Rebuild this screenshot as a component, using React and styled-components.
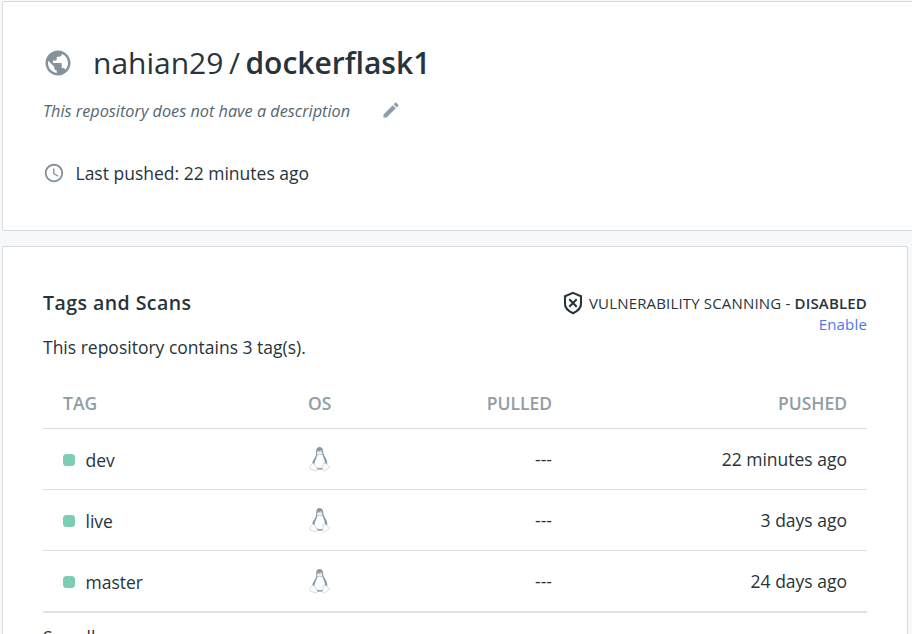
import React from "react";
import styled, { createGlobalStyle } from "styled-components";

const GlobalStyle = createGlobalStyle`
  * { box-sizing: border-box; }
  body {
    margin: 0;
    background: #f7f8fa;
    color: #27343b;
    font-family: "Open Sans", sans-serif;
    font-size: 17.5px;
    font-weight: 400;
    line-height: 24px;
    overflow: hidden;
  }
`;

const Page = styled.main`
  width: 912px;
  height: 634px;
  padding: 1px 0 0 2px;
  overflow: hidden;
`;

const Card = styled.section`
  background: #fff;
  border: 1px solid #d6d9dd;
  border-radius: 2px;
  padding: 0 40px;
`;

const SummaryCard = styled(Card)`
  height: 230px;
  width: 930px;
`;

const TagsCard = styled(Card)`
  width: 906px;
  height: 420px;
  margin-top: 15px;
`;

const TitleRow = styled.div`
  display: flex;
  align-items: center;
  height: 44px;
  margin-top: 39px;
`;

const GlobeIcon = styled.svg`
  width: 30px;
  height: 30px;
  fill: #84929c;
  margin-right: 20px;
`;

const Title = styled.h1`
  margin: 0;
  font-size: 30px;
  font-weight: 400;
  line-height: 44px;
  padding-bottom: 1px;
  white-space: pre;
`;

const RepoName = styled.span`
  font-weight: 600;
  margin-left: 5.5px;
`;

const Slash = styled.span`
  margin-left: 5.5px;
`;

const DescriptionRow = styled.div`
  display: flex;
  align-items: center;
  height: 24px;
  margin-top: 14px;
`;

const Description = styled.span`
  color: #556671;
  font-size: 16.25px;
  font-style: italic;
  white-space: nowrap;
  width: 338px;
`;

const PencilIcon = styled.svg`
  width: 20px;
  height: 20px;
  margin-bottom: 2px;
  fill: #919ca8;
`;

const PushedRow = styled.div`
  display: flex;
  align-items: center;
  height: 24px;
  margin-top: 38px;
`;

const ClockIcon = styled.svg`
  width: 22px;
  height: 22px;
  fill: #84929c;
  margin-right: 10.5px;
`;

const TagsHeader = styled.header`
  display: flex;
  justify-content: space-between;
  margin-top: 43px;
  height: 45px;
`;

const Heading = styled.h2`
  margin: 0;
  font-size: 19.5px;
  font-weight: 600;
  letter-spacing: 0.45px;
  line-height: 26px;
`;

const Scanning = styled.div`
  text-align: right;
  font-size: 15px;
  letter-spacing: 0.17px;
  line-height: 21px;
`;

const ScanStatus = styled.div`
  display: flex;
  align-items: center;
  height: 27px;
  white-space: pre;
`;

const ShieldIcon = styled.svg`
  width: 20px;
  height: 24px;
  margin: 0 6px 2px 0;
  fill: none;
  stroke: #27343b;
  stroke-width: 2.1;
`;

const Strong = styled.strong`
  font-weight: 600;
`;

const EnableLink = styled.a`
  display: block;
  margin-top: -3px;
  color: #4a76ee;
`;

const Table = styled.table`
  width: 824px;
  margin-top: 20px;
  border-collapse: separate;
  border-spacing: 0;
  table-layout: fixed;
`;

const HeadCell = styled.th`
  height: 50px;
  padding: 0 20px 1px;
  border-bottom: 1px solid #dfe0e1;
  color: #919da5;
  font-weight: 600;
  font-size: 17.5px;
  text-align: ${({ $align }) => $align || "left"};
  width: ${({ $width }) => $width};
`;

const Cell = styled.td`
  height: ${({ $last }) => ($last ? "62px" : "61px")};
  padding: 0 20px;
  border-bottom: ${({ $last }) => ($last ? 2 : 1)}px solid #dfe0e1;
  text-align: ${({ $align }) => $align || "left"};
  vertical-align: middle;
`;

const TagName = styled.div`
  display: flex;
  align-items: center;
  padding-top: 1px;
`;

const StatusDot = styled.span`
  width: 12px;
  height: 12px;
  border-radius: 3.5px;
  background: #7bceb4;
  margin: 1px 10.5px 0 0;
`;

const PenguinIcon = styled.svg`
  display: block;
  width: 22px;
  height: 28px;
  margin-left: 1px;
`;

const SeeAll = styled.div`
  margin-top: 12px;
`;

const Penguin = () => (
  <PenguinIcon viewBox="0 0 22 28">
    <path d="M7.2 8.2C7 4.2 7.8 2 10.5 1.9c2.7 0 3.8 2.2 3.8 5.6 0 3 4.3 6.2 4 11.6l-3 5.4-8.9 0.3-3.1-6.2c0-4 4.2-6.5 3.9-10.4z" fill="#8798a4" />
    <path d="M8.4 9.2c1.4 1.2 3.5 1 5 0 .6 3.2 2.9 5.3 2.5 9.8-.3 2.8-2.1 4.2-5 4.2-3.2 0-4.9-1.6-5.2-3.9-.4-3.8 2.3-5.9 2.7-10.1z" fill="#fff" />
    <path d="M8 7.3l2.5-1 3 1-.5 1.5-2.3 1.2L8 8.7z" fill="#edf0f2" />
    <circle cx="9.1" cy="6.1" r=".7" fill="#e5eaed" />
    <circle cx="12" cy="6.1" r=".9" fill="#e5eaed" />
    <path d="M3.9 18.1c1.5.2 2.5 3.2 4.2 4.9 1 1.7-.2 3.1-2 2.7L1 24c-.8-.6.2-2.2.1-3.3 0-1 1.7-.6 2.8-2.6zM14.2 18.6l3.5.1c.5 2.1 1.9 1.9 2.8 3.2-.1 1.1-2.3 1.7-4.1 3.5-1.7 1.2-3.1.2-2.9-1.6z" fill="#fcfdfd" stroke="#ccd3d8" strokeWidth=".8" />
  </PenguinIcon>
);

const tags = [
  { name: "dev", pushed: "22 minutes ago" },
  { name: "live", pushed: "3 days ago" },
  { name: "master", pushed: "24 days ago" },
];

export default function App() {
  return (
    <>
      <GlobalStyle />
      <Page>
        <SummaryCard>
          <TitleRow>
            <GlobeIcon viewBox="0 0 24 24">
              <path d="M12 2C6.48 2 2 6.48 2 12s4.48 10 10 10 10-4.48 10-10S17.52 2 12 2zm-1 17.93c-3.95-.49-7-3.85-7-7.93 0-.62.08-1.21.21-1.79L9 15v1c0 1.1.9 2 2 2v1.93zm6.9-2.54c-.26-.81-1-1.39-1.9-1.39h-1v-3c0-.55-.45-1-1-1H8v-2h2c.55 0 1-.45 1-1V7h2c1.1 0 2-.9 2-2v-.41c2.93 1.19 5 4.06 5 7.41 0 2.08-.8 3.97-2.1 5.39z" />
            </GlobeIcon>
            <Title>
              nahian29<Slash>/</Slash>
              <RepoName>dockerflask1</RepoName>
            </Title>
          </TitleRow>
          <DescriptionRow>
            <Description>This repository does not have a description</Description>
            <PencilIcon viewBox="0 0 24 24">
              <path d="M3 17.25V21h3.75L17.81 9.94l-3.75-3.75L3 17.25zM20.71 7.04c.39-.39.39-1.02 0-1.41l-2.34-2.34c-.39-.39-1.02-.39-1.41 0l-1.83 1.83 3.75 3.75 1.83-1.83z" />
            </PencilIcon>
          </DescriptionRow>
          <PushedRow>
            <ClockIcon viewBox="0 0 24 24">
              <path d="M11.99 2C6.47 2 2 6.48 2 12s4.47 10 9.99 10C17.52 22 22 17.52 22 12S17.52 2 11.99 2zM12 20c-4.42 0-8-3.58-8-8s3.58-8 8-8 8 3.58 8 8-3.58 8-8 8zm.5-13H11v6l5.25 3.15.75-1.23-4.5-2.67z" />
            </ClockIcon>
            Last pushed: 22 minutes ago
          </PushedRow>
        </SummaryCard>
        <TagsCard>
          <TagsHeader>
            <Heading>Tags and Scans</Heading>
            <Scanning>
              <ScanStatus>
                <ShieldIcon viewBox="0 0 20 24">
                  <path d="M10 1.9l8 3.3v7.8c0 3.8-3.2 7-8 9.2-4.8-2.2-8-5.4-8-9.2V5.2z" />
                  <path d="M6.3 8.3l7.4 7.4M13.7 8.3l-7.4 7.4" />
                </ShieldIcon>
                {"VULNERABILITY SCANNING - "}
                <Strong>DISABLED</Strong>
              </ScanStatus>
              <EnableLink>Enable</EnableLink>
            </Scanning>
          </TagsHeader>
          <div>This repository contains 3 tag(s).</div>
          <Table>
            <thead>
              <tr>
                <HeadCell $width="245px">TAG</HeadCell>
                <HeadCell $width="118px">OS</HeadCell>
                <HeadCell $width="166px" $align="right">PULLED</HeadCell>
                <HeadCell $align="right">PUSHED</HeadCell>
              </tr>
            </thead>
            <tbody>
              {tags.map((tag, index) => {
                const last = index === tags.length - 1;
                return (
                  <tr key={tag.name}>
                    <Cell $last={last}><TagName><StatusDot />{tag.name}</TagName></Cell>
                    <Cell $last={last}><Penguin /></Cell>
                    <Cell $last={last} $align="right">---</Cell>
                    <Cell $last={last} $align="right">{tag.pushed}</Cell>
                  </tr>
                );
              })}
            </tbody>
          </Table>
          <SeeAll>See all</SeeAll>
        </TagsCard>
      </Page>
    </>
  );
}
